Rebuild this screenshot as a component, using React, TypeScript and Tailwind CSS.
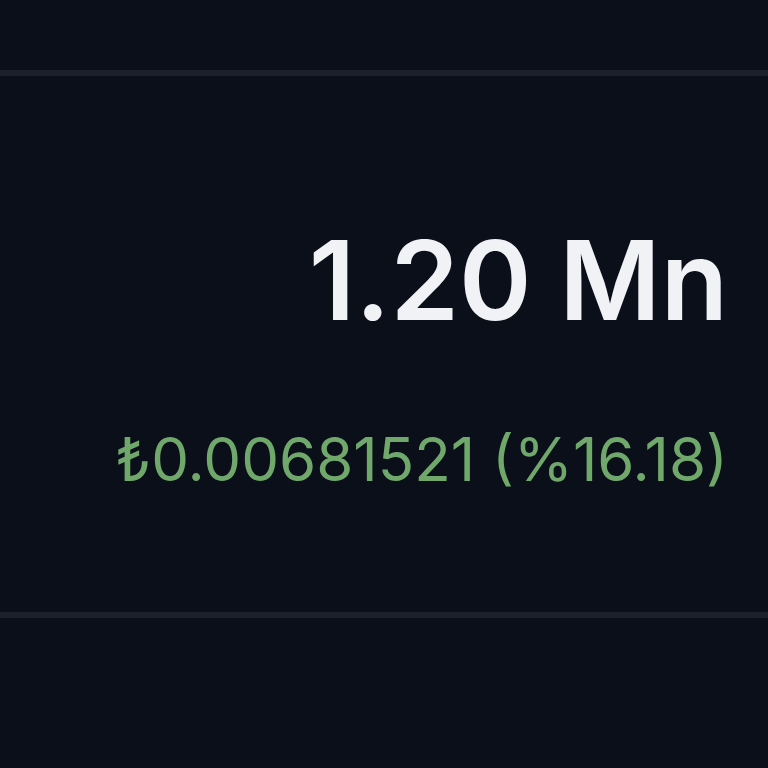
export default function App() {
  return (
    <div className="flex h-screen w-full flex-col bg-[#0b0f19] font-['Inter','Noto_Sans',sans-serif]">
      <div className="h-[70px]" />
      <div className="h-[6px] bg-[#1b202c]" />
      <div className="flex h-[536px] flex-col items-end justify-center pr-[40px] pt-[26px]">
        <div className="text-[110px] font-semibold leading-none text-[#f1f2f6]">
          1.20 Mn
        </div>
        <div className="mt-[94px] text-[60px] leading-none text-[#70a86c]">
          ₺0.00681521 (%16.18)
        </div>
      </div>
      <div className="h-[6px] bg-[#1b202c]" />
      <div className="flex-1" />
    </div>
  );
}
